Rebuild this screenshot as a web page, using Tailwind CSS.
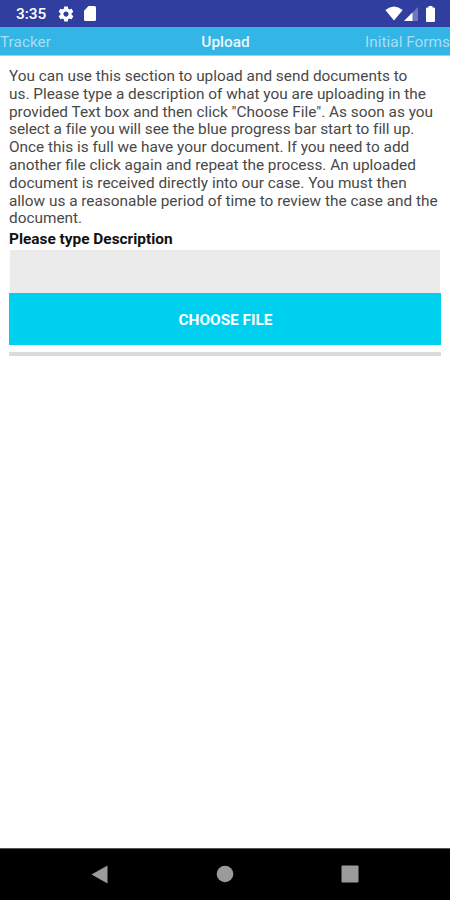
<!DOCTYPE html>
<html lang="en">
<head>
  <meta charset="UTF-8" />
  <meta name="viewport" content="width=device-width, initial-scale=1.0"/>
  <title>Upload</title>
  <script src="https://cdn.jsdelivr.net/npm/@tailwindcss/browser@4"></script>
</head>
<body class="bg-white font-[Roboto,sans-serif]">
  <div class="flex h-[900px] w-[450px] flex-col overflow-hidden">
    <!-- Status bar -->
    <div class="flex h-[27px] shrink-0 items-center bg-[#303f9f] pl-4 pr-[14px] text-white">
      <span class="w-[31px] text-[15.4px] font-medium leading-none pt-[3px]">3:35</span>
      <svg class="ml-[10px] size-[18px]" viewBox="0 0 24 24" fill="currentColor"><path d="M19.43 12.98c.04-.32.07-.64.07-.98s-.03-.66-.07-.98l2.11-1.65c.19-.15.24-.42.12-.64l-2-3.46c-.12-.22-.39-.3-.61-.22l-2.49 1c-.52-.4-1.08-.73-1.69-.98l-.38-2.65C14.46 2.18 14.25 2 14 2h-4c-.25 0-.46.18-.49.42l-.38 2.65c-.61.25-1.17.59-1.69.98l-2.49-1c-.23-.09-.49 0-.61.22l-2 3.46c-.13.22-.07.49.12.64l2.11 1.65c-.04.32-.07.65-.07.98s.03.66.07.98l-2.11 1.65c-.19.15-.24.42-.12.64l2 3.46c.12.22.39.3.61.22l2.49-1c.52.4 1.08.73 1.69.98l.38 2.65c.03.24.24.42.49.42h4c.25 0 .46-.18.49-.42l.38-2.65c.61-.25 1.17-.59 1.69-.98l2.49 1c.23.09.49 0 .61-.22l2-3.46c.12-.22.07-.49-.12-.64l-2.11-1.65zM12 15.500c-1.930 0-3.500-1.570-3.500-3.500s1.570-3.500 3.500-3.500 3.500 1.570 3.500 3.500-1.570 3.500-3.500 3.500z"/></svg>
      <svg class="ml-[9px] h-[15px] w-3" viewBox="0 0 12 15" fill="currentColor"><path d="M4.500 0H10.500Q12 0 12 1.500V13.500Q12 15 10.500 15H1.500Q0 15 0 13.500V4.800Z"/></svg>
      <div class="ml-auto flex items-center">
        <svg class="h-[15px] w-[18px]" viewBox="0 0 18 15" fill="currentColor"><path d="M9 14.500.3 4Q9-3 17.700 4Z"/></svg>
        <svg class="ml-px mt-px h-[14px] w-[14px]" viewBox="0 0 14 14" fill="currentColor"><path d="M14 0V14H0Z" opacity=".3"/><path d="M8.500 5.500V14H0Z"/></svg>
        <svg class="ml-[7px] h-4 w-[11px]" viewBox="0 0 11 16" fill="currentColor"><path d="M3.500 0H7.500V1.500H9Q10 1.500 10 2.500V15Q10 16 9 16H2Q1 16 1 15V2.500Q1 1.500 2 1.500H3.500Z"/></svg>
      </div>
    </div>

    <!-- Tabs -->
    <div class="grid h-[29px] shrink-0 grid-cols-3 items-center border-b border-[#8fd6f1] bg-[#33b5e5] pt-[4px] text-[15.4px] leading-none text-[#a6def4]">
      <span>Tracker</span>
      <span class="pl-px text-center font-medium text-[#e9f8fd]">Upload</span>
      <span class="text-right">Initial Forms</span>
    </div>

    <!-- Upload form -->
    <div class="flex grow flex-col px-[9px] pt-3">
      <p class="whitespace-nowrap text-[15.37px] leading-[17.8px] text-[#484848]">
        You can use this section to upload and send documents to<br>
        us. Please type a description of what you are uploading in the<br>
        provided Text box and then click "Choose File". As soon as you<br>
        <span class="tracking-[-0.03px]">select a file you will see the blue progress bar start to fill up.</span><br>
        Once this is full we have your document. If you need to add<br>
        another file click again and repeat the process. An uploaded<br>
        document is received directly into our case. You must then<br>
        allow us a reasonable period of time to review the case and the<br>
        document.
      </p>
      <label for="description" class="mt-[2px] h-[20px] text-[15.4px] font-bold leading-[18px] text-[#111]">Please type Description</label>
      <input type="text" id="description" class="mx-px h-[43px] bg-[#ebebeb] px-2">
      <button class="h-[52px] bg-[#00d0f0] pt-[3px] pl-px text-[15.4px] font-bold text-white">CHOOSE FILE</button>
      <div class="mt-[7px] h-1 bg-[#d9dcdd]"></div>
    </div>

    <!-- Navigation bar -->
    <div class="h-[52px] shrink-0 border-t border-[#555] bg-black text-[#9b9b9b]">
      <svg class="block h-[51px] w-[450px]" viewBox="0 0 450 51" fill="currentColor">
        <path d="M107.500 16.500V34.500L91.500 25.500Z"/>
        <circle cx="225" cy="25" r="8.300"/>
        <rect x="341.500" y="16.500" width="17" height="17" rx="1"/>
      </svg>
    </div>
  </div>
</body>
</html>
